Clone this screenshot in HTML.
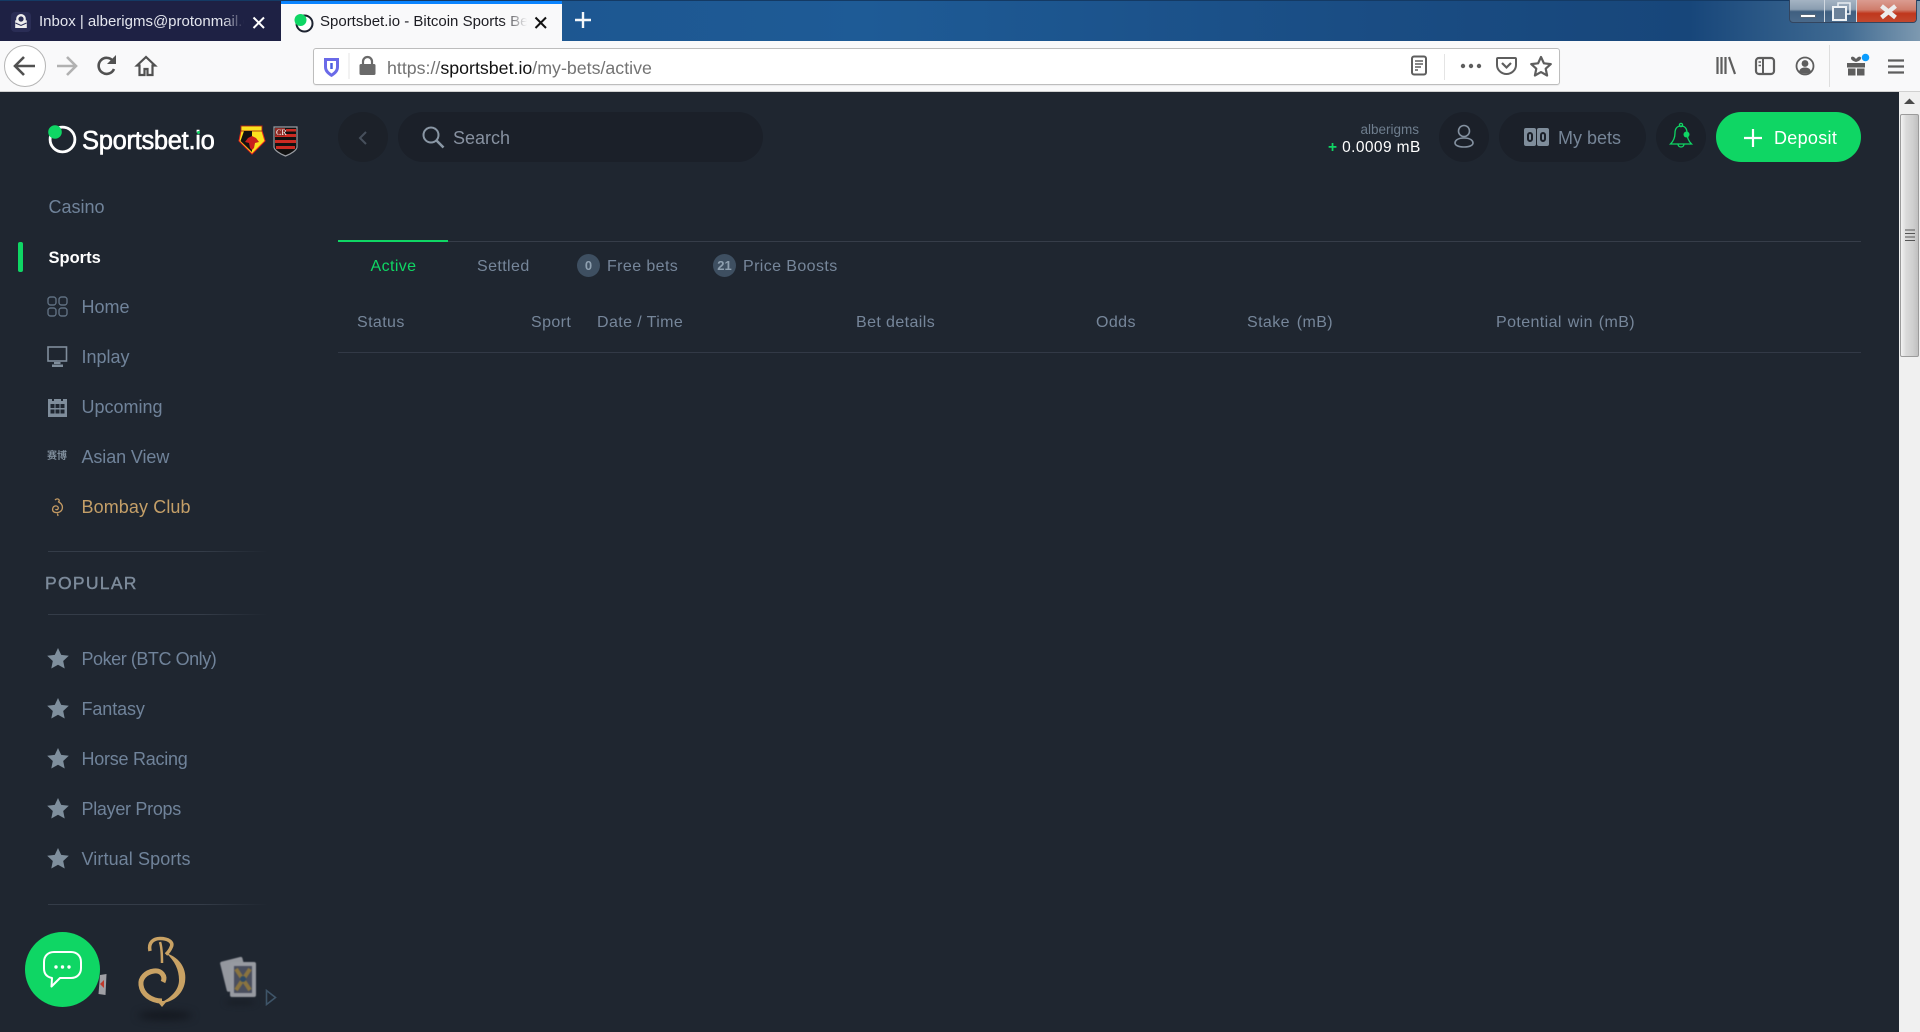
<!DOCTYPE html>
<html lang="en"><head><meta charset="utf-8"><title>Sportsbet.io - Bitcoin Sports Betting</title>
<style>
html,body{margin:0;padding:0;width:1920px;height:1032px;overflow:hidden;background:#1f2630;font-family:"Liberation Sans",sans-serif}
.a{position:absolute}
.t{position:absolute;white-space:nowrap;line-height:20px;height:20px}
.n{font-size:18px;color:#70839a}
.h{font-size:16px;color:#76869a;letter-spacing:.4px}
.pill{position:absolute;background:#1b2029;border-radius:25px;height:50px;top:112px}
.ln{position:absolute;height:1px;background:linear-gradient(90deg,#343c48 0,#343c48 70%,#1f2630 100%);left:48px;width:220px}
svg{position:absolute;overflow:visible}
</style></head><body>
<!-- title bar -->
<div class="a" style="left:0;top:0;width:1920px;height:41px;background:linear-gradient(90deg,#1b4f88 0,#1e5b96 45%,#1a4d84 70%,#17467a 88%,#3f6a92 96%,#7d99b0 100%)"></div>
<div class="a" style="left:0;top:0;width:1920px;height:1px;background:#143a64"></div>
<div class="a" style="left:0;top:1px;width:281px;height:40px;background:#1e2144"></div>
<div class="a" style="left:281px;top:1px;width:281px;height:40px;background:#f9f9fa"></div>
<div class="a" style="left:281px;top:1px;width:281px;height:3px;background:#0a84ff"></div>
<div class="a" style="left:11px;top:12px;width:20px;height:20px;border-radius:4px;background:#2a2d55"></div>
<svg style="left:0;top:0" width="40" height="40"><path d="M21 14a4.800 4.800 0 0 0-4.800 4.800v1.600h-1v7.600h11.600v-7.600h-1v-1.600A4.800 4.800 0 0 0 21 14z" fill="#eee"/><circle cx="21" cy="19" r="2.600" fill="#2a2d55"/><path d="M15.500 23l5.500 2.500 5.500-2.500" stroke="#2a2d55" fill="none"/></svg>
<div class="t" style="left:39px;top:12px;width:205px;overflow:hidden;font-size:15px;color:#e4e6ee;-webkit-mask-image:linear-gradient(90deg,#000 90%,transparent)">Inbox | alberigms@protonmail.com</div>
<svg style="left:252px;top:16px" width="14" height="14"><path d="M1.500 1.500l10.500 10.500M12 1.500L1.500 12" stroke="#fff" stroke-width="2"/></svg>
<svg style="left:293px;top:12px" width="22" height="22"><circle cx="11.500" cy="11.500" r="8" fill="#fff" stroke="#1d2330" stroke-width="2"/><circle cx="7.500" cy="8" r="6" fill="#0fd664"/></svg>
<div class="t" style="left:320px;top:12px;width:207px;overflow:hidden;font-size:15px;color:#1c1c22;-webkit-mask-image:linear-gradient(90deg,#000 88%,transparent)">Sportsbet.io - Bitcoin Sports Betting</div>
<svg style="left:534px;top:16px" width="14" height="14"><path d="M1.500 1.500l10.500 10.500M12 1.500L1.500 12" stroke="#111" stroke-width="2"/></svg>
<svg style="left:574px;top:11px" width="18" height="18"><path d="M9 1v16M1 9h16" stroke="#f4f7fa" stroke-width="2.400"/></svg>
<!-- window controls -->
<div class="a" style="left:1789px;top:-2px;width:128px;height:25px;border:1px solid #33455f;border-radius:0 0 4px 4px;box-sizing:border-box;overflow:hidden;background:linear-gradient(180deg,#a7b6c5 0,#8a9db0 45%,#3f5f80 55%,#49698a 100%)">
<div class="a" style="left:34px;top:0;width:1px;height:24px;background:#d0d8e0"></div>
<div class="a" style="left:66px;top:0;width:1px;height:24px;background:#d0d8e0"></div>
<div class="a" style="left:67px;top:0;width:61px;height:24px;background:linear-gradient(180deg,#dc9f94 0,#cf7d6c 45%,#c0371d 60%,#c24a30 100%)"></div>
<div class="a" style="left:10px;top:15px;width:16px;height:4px;background:#fff;border:1px solid #55677a;box-sizing:border-box"></div>
</div>
<svg style="left:1830px;top:2px" width="30" height="20"><rect x="8" y="1" width="12" height="11" fill="none" stroke="#e8edf2" stroke-width="1.500"/><rect x="3" y="5" width="13" height="13" fill="#6b8199" stroke="#eef2f5" stroke-width="2"/></svg>
<svg style="left:1878px;top:5px" width="22" height="15"><path d="M3.500 1l14 11.500M17.500 1l-14 11.500" stroke="#ececec" stroke-width="4.400"/></svg>
<!-- toolbar -->
<div class="a" style="left:0;top:41px;width:1920px;height:50px;background:#f9f9fa;border-bottom:1px solid #d0d0d0;box-sizing:content-box"></div>
<div class="a" style="left:4px;top:45px;width:42px;height:42px;border-radius:50%;background:#fff;border:1px solid #b5b5b5;box-sizing:border-box"></div>
<svg style="left:0;top:41px" width="170" height="50"><g fill="none" stroke-width="2.600"><path d="M35 25H16M24 16l-9 9 9 9" stroke="#515151"/><path d="M76 25H57M67 16l9 9-9 9" stroke="#b1b1b1"/><path d="M113 20a8 8 0 1 0 1 8" stroke="#515151"/></g><path d="M116 14v9h-9z" fill="#515151"/><path d="M146 16l-9 8.500h2.500v9.500h5v-6h3v6h5v-9.500h2.500z" fill="none" stroke="#515151" stroke-width="2.200"/></svg>
<div class="a" style="left:313px;top:48px;width:1247px;height:37px;background:#fff;border:1px solid #bdbdbd;border-radius:3px;box-sizing:border-box;box-shadow:0 1px 1px rgba(0,0,0,.06)"></div>
<svg style="left:320px;top:52px" width="60" height="28"><path d="M4 6h15v9c0 5-4 8-7.500 10C8 23 4 20 4 15z" fill="#6a6ae8"/><path d="M7 9h9v6c0 3-2.500 5-4.500 6.500C9.500 20 7 18 7 15z" fill="#fff"/><path d="M11.500 11v6" stroke="#4a5fe0" stroke-width="2.500"/><path d="M29 1v26" stroke="#e6e6e6"/><path d="M43 13v-3.500a4.500 4.500 0 0 1 9 0V13" fill="none" stroke="#6a6a6a" stroke-width="2.200"/><rect x="39.500" y="12" width="16" height="11" rx="1.500" fill="#6a6a6a"/></svg>
<div class="t" style="left:387px;top:58px;font-size:17.800px;color:#737373">https://<span style="color:#111">sportsbet.io</span>/my-bets/active</div>
<svg style="left:1405px;top:50px" width="155" height="32"><rect x="7" y="6.500" width="14" height="18" rx="2" fill="none" stroke="#5e5e5e" stroke-width="2"/><path d="M10 11h8M10 14h8M10 17h6M10 20h3" stroke="#5e5e5e" stroke-width="1.500"/><path d="M39.500 4v26" stroke="#e4e4e4"/><circle cx="58" cy="16" r="2.200" fill="#5e5e5e"/><circle cx="66" cy="16" r="2.200" fill="#5e5e5e"/><circle cx="74" cy="16" r="2.200" fill="#5e5e5e"/><path d="M93 8h17c.6 0 1 .4 1 1v6c0 5-4.500 9-9.500 9S92 20 92 15V9c0-.6.400-1 1-1z" fill="none" stroke="#5e5e5e" stroke-width="2"/><path d="M97 13l4.500 4.500L106 13" fill="none" stroke="#5e5e5e" stroke-width="2.200"/><path d="M136 7l2.900 6.300 6.900.8-5.100 4.600 1.400 6.800-6.100-3.400-6.100 3.400 1.400-6.800-5.100-4.600 6.900-.8z" fill="none" stroke="#5e5e5e" stroke-width="2.200" stroke-linejoin="round"/></svg>
<svg style="left:1710px;top:50px" width="200" height="32"><path d="M7.500 7v17M11.500 7v17M15.500 7v17" stroke="#5e5e5e" stroke-width="2.200"/><path d="M19 7l6 17" stroke="#5e5e5e" stroke-width="2.200"/><rect x="46" y="8" width="18" height="16" rx="3" fill="none" stroke="#5e5e5e" stroke-width="2.200"/><path d="M53 8v16" stroke="#5e5e5e" stroke-width="2"/><path d="M48.500 12h2.500M48.500 15.500h2.500" stroke="#5e5e5e" stroke-width="1.400"/><circle cx="95" cy="16" r="8.500" fill="none" stroke="#5e5e5e" stroke-width="1.800"/><circle cx="95" cy="13.500" r="3.400" fill="#5e5e5e"/><path d="M89 21.500c1-3 3-4 6-4s5 1 6 4c-1.500 1.500-3.500 2-6 2s-4.500-.5-6-2z" fill="#5e5e5e"/><path d="M119.500 -5v42" stroke="#dedede"/><rect x="137" y="13" width="18" height="4.500" fill="#5e5e5e"/><rect x="138" y="18.500" width="7.500" height="7" fill="#5e5e5e"/><rect x="147" y="18.500" width="7.500" height="7" fill="#5e5e5e"/><path d="M146 12c-3-1-5-2-5-4s3-2 5 1c2-3 5-3 5-1s-2 3-5 4z" fill="#5e5e5e"/><circle cx="155.500" cy="7.500" r="3.800" fill="#0a9dff"/><path d="M178 10.500h16M178 16.500h16M178 22.500h16" stroke="#5e5e5e" stroke-width="2.300"/></svg>
<!-- scrollbar -->
<div class="a" style="left:1899px;top:92px;width:21px;height:940px;background:#f0f0f0"></div>
<svg style="left:1899px;top:92px" width="21" height="20"><path d="M5 12l5.500-5.500L16 12z" fill="#4a4a4a"/></svg>
<div class="a" style="left:1900px;top:114px;width:19px;height:243px;box-sizing:border-box;border:1px solid #9b9b9b;border-radius:2px;background:linear-gradient(90deg,#f2f2f2 0,#dadada 30%,#cfcfcf 70%,#c0c0c0 100%)"></div>
<svg style="left:1904px;top:228px" width="12" height="14"><path d="M1 2h10M1 5.500h10M1 9h10M1 12.500h10" stroke="#555" stroke-width="1"/></svg>
<!-- logo -->
<svg style="left:46px;top:123px" width="34" height="34"><circle cx="16.500" cy="16.500" r="12.400" fill="none" stroke="#fff" stroke-width="2.800"/><circle cx="9" cy="9" r="6.800" fill="#0fd664"/></svg>
<div class="t" style="left:82px;top:128px;height:26px;line-height:26px;font-size:25.500px;color:#fff;font-weight:400;letter-spacing:-.3px;-webkit-text-stroke:.6px #fff">Sportsbet.io</div>
<div class="a" style="left:197px;top:131px;width:3px;height:3px;border-radius:50%;background:#0fd664"></div>
<svg style="left:238px;top:124px" width="30" height="32"><path d="M3 2h21v5l3 10-13 13L1 17l2-10z" fill="#fbe11e" stroke="#e8261c" stroke-width="1"/><rect x="3" y="2" width="21" height="5" fill="#fbe11e" stroke="#a31d16" stroke-width=".8"/><path d="M14 7h-8L2.500 17 14 28z" fill="#111"/><path d="M14 12l-4 2-3 4 4 1 1 5 2 2 2-2 1-5 4-1-3-4z" fill="#c8201c"/></svg>
<svg style="left:272px;top:125px" width="28" height="32"><path d="M2 2h23v20c0 3-6 7-11.500 9C8 29 2 25 2 22z" fill="#111" stroke="#9a9da3" stroke-width="1.200"/><path d="M3 9h21v3H3zM3 15h21v3H3zM4 21h19v3H4z" fill="#cb2a22"/><path d="M14 4h10v2.500H14zM14 8.500h10" stroke="none" fill="#cb2a22"/><rect x="3" y="3" width="10" height="8" fill="#8e2a24"/><text x="4" y="10" font-size="8" fill="#fff" font-family="Liberation Serif,serif">CR</text></svg>
<!-- sidebar nav -->
<div class="t n" style="left:48.500px;top:197px">Casino</div>
<div class="a" style="left:18px;top:242px;width:5px;height:30px;background:#0fd664;border-radius:2px"></div>
<div class="t n" style="left:48.500px;top:248px;color:#fff;font-weight:700;font-size:16.500px">Sports</div>
<svg style="left:47px;top:296px" width="22" height="22"><g fill="none" stroke="#5f6f80" stroke-width="1.400"><rect x="1" y="1" width="8" height="8" rx="2.500"/><rect x="12" y="1" width="8" height="8" rx="2.500"/><rect x="1" y="12" width="8" height="8" rx="2.500"/><rect x="12" y="12" width="8" height="8" rx="2.500"/></g></svg>
<div class="t n" style="left:81.500px;top:297px">Home</div>
<svg style="left:47px;top:346px" width="22" height="22"><rect x="1" y="1" width="18.500" height="14" fill="none" stroke="#7f8d9b" stroke-width="1.600"/><path d="M7 16h6.500v2H7zM5 18.500h11V21H5z" fill="#7f8d9b"/></svg>
<div class="t n" style="left:81.500px;top:347px">Inplay</div>
<svg style="left:47px;top:396px" width="22" height="22"><rect x="1" y="3" width="19" height="18" fill="#7f8d9b"/><g fill="#1f2630"><rect x="3.500" y="8" width="4" height="4"/><rect x="8.500" y="8" width="4" height="4"/><rect x="13.500" y="8" width="4" height="4"/><rect x="3.500" y="13.500" width="4" height="4"/><rect x="8.500" y="13.500" width="4" height="4"/><rect x="13.500" y="13.500" width="4" height="4"/><rect x="5" y="1" width="2" height="4"/><rect x="14" y="1" width="2" height="4"/></g></svg>
<div class="t n" style="left:81.500px;top:397px">Upcoming</div>
<div class="t" style="left:47px;top:447px;font-size:10px;color:#7f8d9b;font-family:'Liberation Sans','Noto Sans CJK SC',sans-serif;font-weight:700">赛博</div>
<div class="t n" style="left:81.500px;top:447px;letter-spacing:-.1px">Asian View</div>
<svg style="left:50px;top:497px" width="16" height="20"><g fill="none" stroke="#c49a63" stroke-width="1.300"><path d="M5 3c2-2 5-1 4 1.500"/><path d="M8 4.500c4 2 5 5 4 8-1 2.500-5 4-8 2.500-2-1-2-5 1-6 2-.5 4 1 3 3-.5 1-2 1-2.500 0"/><path d="M7.500 16.500l.5 2.500"/></g></svg>
<div class="t n" style="left:81.500px;top:497px;color:#c49f68;letter-spacing:.1px">Bombay Club</div>
<div class="ln" style="top:551px"></div>
<div class="t" style="left:45px;top:573px;font-size:17.500px;letter-spacing:1.300px;color:#7d8b9b;-webkit-text-stroke:.4px #7d8b9b">POPULAR</div>
<div class="ln" style="top:614px"></div>
<svg width="0" height="0" style="left:0;top:0"><defs><path id="star" d="M11 0l3.200 6.900 7.600.9-5.600 5.200 1.500 7.500L11 16.800 4.300 20.500 5.800 13 .2 7.800l7.600-.9z"/></defs></svg>
<svg style="left:47px;top:648px" width="22" height="22"><use href="#star" fill="#7f8f9d"/></svg>
<div class="t n" style="left:81.500px;top:649px;letter-spacing:-.45px">Poker (BTC Only)</div>
<svg style="left:47px;top:698px" width="22" height="22"><use href="#star" fill="#7f8f9d"/></svg>
<div class="t n" style="left:81.500px;top:699px;letter-spacing:-.1px">Fantasy</div>
<svg style="left:47px;top:748px" width="22" height="22"><use href="#star" fill="#7f8f9d"/></svg>
<div class="t n" style="left:81.500px;top:749px;letter-spacing:-.25px">Horse Racing</div>
<svg style="left:47px;top:798px" width="22" height="22"><use href="#star" fill="#7f8f9d"/></svg>
<div class="t n" style="left:81.500px;top:799px;letter-spacing:-.3px">Player Props</div>
<svg style="left:47px;top:848px" width="22" height="22"><use href="#star" fill="#7f8f9d"/></svg>
<div class="t n" style="left:81.500px;top:849px;letter-spacing:.1px">Virtual Sports</div>
<div class="ln" style="top:904px"></div>
<!-- bottom logos -->
<div class="a" style="left:138px;top:1011px;width:54px;height:9px;border-radius:50%;background:#14181f;filter:blur(4px)"></div>
<div class="a" style="left:225px;top:1000px;width:30px;height:5px;border-radius:50%;background:#191e26;filter:blur(3px)"></div>
<svg style="left:135px;top:932px" width="60" height="80"><g fill="none" stroke="#c9a264"><path d="M15 19C13 10 19 6.500 25 6.500c8 0 14 3.500 11 9-1 2.500-3 5-5 7" stroke-width="3.500"/><path d="M25 10c2 6 2 14 2 21" stroke-width="2.500"/><path d="M28 50C31 44 26 38 19 39 11 40 5 46 6 53c1 9 10 16 21 16" stroke-width="5"/></g><path d="M31 21C46 26 52 38 50 50 48 62 38 71 25 71 36 66 44 58 44 48 44 38 40 29 31 21z" fill="#c9a264"/><path d="M22 69h10l-5 6z" fill="#c9a264"/></svg>
<svg style="left:220px;top:952px" width="40" height="50"><g style="filter:blur(.6px)"><rect x="3" y="7" width="23" height="31" rx="2" fill="#94979e" transform="rotate(-14 14 22)"/><rect x="10" y="10" width="26" height="35" rx="2" fill="#979aa1"/><rect x="14" y="14" width="18" height="27" fill="#4a4f5e"/><path d="M16 17l14 21M30 17L16 38" stroke="#8a7440" stroke-width="4"/><circle cx="23" cy="27" r="3" fill="#2d4a66"/></g></svg>
<svg style="left:264px;top:988px" width="14" height="20"><path d="M2.500 2.500v14l9-7z" fill="none" stroke="#3e5468" stroke-width="1.600"/></svg>
<svg style="left:96px;top:973px" width="12" height="26"><path d="M4 2l6.500-1-1 21-7-1z" fill="#a0a0a5"/><path d="M4 11l4-4v8z" fill="#c0392b"/></svg>
<div class="a" style="left:25px;top:932px;width:75px;height:75px;border-radius:50%;background:#0fd664"></div>
<svg style="left:25px;top:932px" width="75" height="75"><path d="M29 20h17c6 0 10 4 10 10v6c0 6-4 10-10 10H35l-8.500 8.500 .5-8.500c-5-1-8-4-8-9.500V30c0-6 4-10 10-10z" fill="none" stroke="#fff" stroke-width="2" stroke-linejoin="round"/><circle cx="31" cy="35" r="1.700" fill="#fff"/><circle cx="37.500" cy="35" r="1.700" fill="#fff"/><circle cx="44" cy="35" r="1.700" fill="#fff"/></svg>
<!-- header -->
<div class="a" style="left:338px;top:112px;width:50px;height:50px;border-radius:50%;background:#1c2129"></div>
<svg style="left:357px;top:130px" width="14" height="16"><path d="M9 2L3 8l6 6" fill="none" stroke="#47505c" stroke-width="2"/></svg>
<div class="pill" style="left:398px;width:365px"></div>
<svg style="left:421px;top:125px" width="26" height="26"><circle cx="10" cy="10" r="7.500" fill="none" stroke="#8a97a5" stroke-width="2"/><path d="M15.500 15.500l7 7" stroke="#8a97a5" stroke-width="2.600"/></svg>
<div class="t" style="left:453px;top:128px;font-size:18px;color:#8791a0">Search</div>
<div class="t" style="right:501px;top:120px;font-size:13.500px;color:#6f7e8e">alberigms</div>
<div class="t" style="left:1328px;top:138px;font-size:15.500px;color:#fff;letter-spacing:.4px"><span style="color:#0fd664;font-weight:700">+</span> 0.0009 mB</div>
<div class="a" style="left:1439px;top:112px;width:50px;height:50px;border-radius:50%;background:#1b2029"></div>
<svg style="left:1439px;top:112px" width="50" height="50"><g fill="none" stroke="#8491a0" stroke-width="1.600"><circle cx="25" cy="19" r="5.500"/><path d="M25 26c-7 0-9 3-9 5 0 2 3 4 9 4s9-2 9-4c0-2-2-5-9-5z"/></g></svg>
<div class="pill" style="left:1499px;width:147px"></div>
<div class="a" style="left:1524px;top:128px;width:12px;height:18px;background:#7f8d9b;border-radius:2px"></div>
<div class="a" style="left:1537px;top:128px;width:12px;height:18px;background:#7f8d9b;border-radius:2px"></div>
<div class="a" style="left:1527px;top:132px;width:6px;height:10px;border:2px solid #1b2029;border-radius:3px;box-sizing:border-box"></div>
<div class="a" style="left:1540px;top:132px;width:6px;height:10px;border:2px solid #1b2029;border-radius:3px;box-sizing:border-box"></div>
<div class="t" style="left:1558px;top:128px;font-size:18px;color:#768597">My bets</div>
<div class="a" style="left:1656px;top:112px;width:50px;height:50px;border-radius:50%;background:#1b2029"></div>
<svg style="left:1656px;top:112px" width="50" height="50"><g fill="none" stroke="#0fd664" stroke-width="1.300"><path d="M25 14c-4.500 0-6 3.500-6 7 0 5-1.500 8-4.500 11h21c-3-3-4.500-6-4.500-11 0-3.500-1.500-7-6-7z"/><circle cx="25" cy="13" r="1.600"/><path d="M22 32c0 4 6 4 6 0"/></g><circle cx="30.500" cy="22.500" r="3" fill="#0fd664"/></svg>
<div class="a" style="left:1716px;top:112px;width:145px;height:50px;border-radius:25px;background:#0fd664"></div>
<svg style="left:1744px;top:129px" width="18" height="18"><path d="M9 0v18M0 9h18" stroke="#fff" stroke-width="2.200"/></svg>
<div class="t" style="left:1774px;top:128px;font-size:18px;color:#fff;letter-spacing:.3px">Deposit</div>
<!-- tabs -->
<div class="a" style="left:338px;top:241px;width:1523px;height:1px;background:#363d49"></div>
<div class="a" style="left:338px;top:240px;width:110px;height:2px;background:#0fd664"></div>
<div class="t h" style="left:370.500px;top:257px;color:#0fd664">Active</div>
<div class="t h" style="left:477px;top:257px">Settled</div>
<div class="a" style="left:577px;top:254px;width:23px;height:23px;border-radius:50%;background:#3e4f61;color:#8fa0b0;font-size:13px;line-height:23px;text-align:center;font-weight:700">0</div>
<div class="t h" style="left:607px;top:257px">Free bets</div>
<div class="a" style="left:713px;top:254px;width:23px;height:23px;border-radius:50%;background:#3e4f61;color:#8fa0b0;font-size:13px;line-height:23px;text-align:center;font-weight:700">21</div>
<div class="t h" style="left:743px;top:257px">Price Boosts</div>
<div class="t h" style="left:357px;top:313px">Status</div>
<div class="t h" style="left:531px;top:313px">Sport</div>
<div class="t h" style="left:597px;top:313px">Date / Time</div>
<div class="t h" style="left:856px;top:313px">Bet details</div>
<div class="t h" style="left:1096px;top:313px">Odds</div>
<div class="t h" style="left:1247px;top:313px;word-spacing:2px">Stake (mB)</div>
<div class="t h" style="left:1496px;top:313px;word-spacing:1px">Potential win (mB)</div>
<div class="a" style="left:338px;top:352px;width:1523px;height:1px;background:#323946"></div>
</body></html>
